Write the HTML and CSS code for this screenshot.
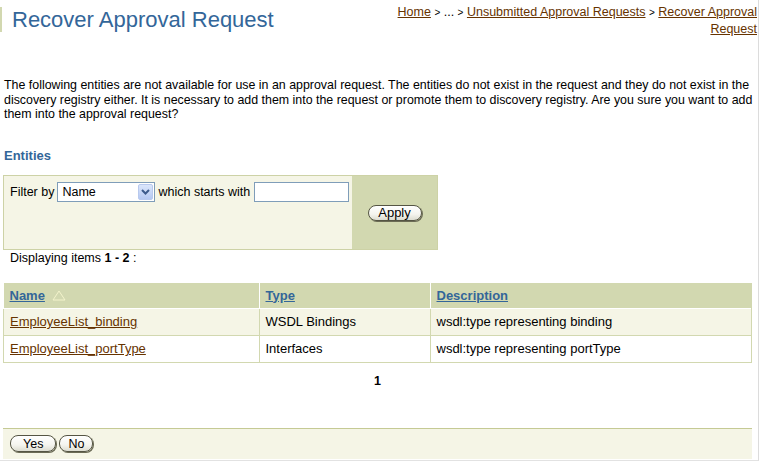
FILE: index.html
```html
<!DOCTYPE html>
<html lang="en">
<head>
    <meta charset="UTF-8">
    <title>Recover Approval Request</title>
    <link rel="stylesheet" href="styles.css">
</head>
<body>
    <div class="page">
        <div class="header">
            <h1 class="title">Recover Approval Request</h1>
            <div class="breadcrumb">
                <a href="#">Home</a> <span class="sep">&gt;</span> ... <span class="sep">&gt;</span>
                <a href="#">Unsubmitted Approval Requests</a> <span class="sep">&gt;</span>
                <a href="#">Recover Approval Request</a>
            </div>
        </div>

        <div class="content">
            <p class="intro">The following entities are not available for use in an approval request. The entities do not exist in the request and they do not exist in the discovery registry either. It is necessary to add them into the request or promote them to discovery registry. Are you sure you want to add them into the approval request?</p>

            <h2 class="section-title">Entities</h2>

            <div class="filter-box">
                <div class="filter-main">
                    <span>Filter by</span>
                    <div class="select">
                        <span>Name</span>
                        <span class="select-arrow">
                            <svg width="9" height="6" viewBox="0 0 9 6"><path d="M1 1 L4.5 4.5 L8 1" fill="none" stroke="#3c5a8c" stroke-width="2"/></svg>
                        </span>
                    </div>
                    <span>which starts with</span>
                    <div class="text-input"></div>
                </div>
                <div class="filter-side">
                    <button class="btn btn-apply">Apply</button>
                </div>
            </div>

            <div class="count">Displaying items <b>1 - 2</b> :</div>

            <table class="results">
                <tr>
                    <th class="col-name"><a href="#">Name</a>
                        <svg class="sort" width="14" height="11" viewBox="0 0 14 11"><polygon points="7,1 13,10 1,10" fill="none" stroke="#f4f4cc" stroke-width="1"/></svg>
                    </th>
                    <th class="col-type"><a href="#">Type</a></th>
                    <th><a href="#">Description</a></th>
                </tr>
                <tr class="odd">
                    <td><a href="#">EmployeeList_binding</a></td>
                    <td>WSDL Bindings</td>
                    <td>wsdl:type representing binding</td>
                </tr>
                <tr>
                    <td><a href="#">EmployeeList_portType</a></td>
                    <td>Interfaces</td>
                    <td>wsdl:type representing portType</td>
                </tr>
            </table>

            <div class="pager">1</div>

            <div class="footer-bar">
                <button class="btn">Yes</button>
                <button class="btn btn-no">No</button>
            </div>
        </div>
    </div>
</body>
</html>
```

FILE: styles.css
```css
body {
    margin: 0;
    padding: 0;
    background-color: #ffffff;
    color: #000000;
    font-family: 'Liberation Sans', Arial, sans-serif;
    font-size: 12.5px;
}

a {
    color: #663300;
}

.page {
    width: 758px;
    height: 460px;
    border-right: 1px solid #dcdcdc;
    border-bottom: 1px solid #e2e2e2;
    overflow: hidden;
}

.header {
    display: flex;
    justify-content: space-between;
    align-items: flex-start;
}

.title {
    margin: 7px 0 0 0;
    padding-left: 10px;
    border-left: 2px solid #d2d8b0;
    font-size: 22px;
    font-weight: normal;
    line-height: 25px;
    color: #336699;
}

.breadcrumb {
    width: 366px;
    margin-top: 4px;
    margin-right: 1px;
    text-align: right;
    line-height: 16px;
    font-size: 12.5px;
}

.breadcrumb .sep {
    font-size: 10px;
}

.content {
    padding: 0 6px 0 3px;
}

.intro {
    margin: 41px -5px 0 1px;
    font-size: 12.4px;
    line-height: 14.5px;
}

.section-title {
    margin: 26px 0 0 1px;
    font-size: 13px;
    line-height: 16px;
    color: #336699;
}

.filter-box {
    display: flex;
    width: 433px;
    height: 73px;
    margin-top: 11px;
    border: 1px solid #cdd2a6;
    background-color: #f5f5e6;
}

.filter-main {
    flex-grow: 1;
    display: flex;
    align-items: flex-start;
    gap: 3px;
    padding: 6px 0 0 6px;
}

.filter-main > span {
    line-height: 20px;
}

.select {
    width: 92px;
    height: 18px;
    border: 1px solid #7f9db9;
    background-color: #ffffff;
    display: flex;
    justify-content: space-between;
    align-items: center;
    padding-left: 4px;
    box-sizing: content-box;
}

.select-arrow {
    width: 15px;
    height: 16px;
    margin-right: 1px;
    background: linear-gradient(#dbe6fb, #b5c8f2);
    border: 1px solid #b8c9ee;
    border-radius: 2px;
    box-sizing: border-box;
    display: flex;
    justify-content: center;
    align-items: center;
}

.text-input {
    width: 93px;
    height: 18px;
    border: 1px solid #7f9db9;
    background-color: #ffffff;
    margin-left: 1px;
}

.filter-side {
    width: 85px;
    background-color: #d2d8b0;
    display: flex;
    justify-content: center;
    align-items: center;
    padding-top: 2px;
}

.btn {
    font-family: 'Liberation Sans', Arial, sans-serif;
    font-size: 12.5px;
    color: #000000;
    height: 17px;
    padding: 0 12px;
    border: 1px solid #555544;
    border-radius: 8px;
    background: linear-gradient(#ffffff, #f4f4ee 60%, #dcdcd0);
    box-shadow: 1px 1px 0 #6b6b55;
    line-height: 14px;
}

.btn-no {
    padding: 0 8px;
}

.btn-apply {
    font-size: 13px;
    width: 54px;
    height: 16px;
    padding: 0;
}

.count {
    margin: 1px 0 0 7px;
    line-height: 14px;
}

.results {
    width: 749px;
    margin-top: 18px;
    border-collapse: collapse;
}

.results th {
    height: 25px;
    padding: 0 6px;
    text-align: left;
    font-size: 13px;
    background-color: #d2d8b0;
    border-right: 1px solid #ffffff;
}

.results th:last-child {
    border-right: 1px solid #d2d8b0;
}

.results th a {
    color: #336699;
}

.results .col-name {
    width: 243px;
}

.results .col-type {
    width: 158px;
}

.sort {
    vertical-align: -1px;
    margin-left: 3px;
}

.results td {
    height: 26px;
    padding: 0 6px;
    font-size: 13px;
    border: 1px solid #d2d8b0;
}

.results tr.odd td {
    background-color: #f5f5e6;
    border-top: 1px solid #ffffff;
}

.pager {
    margin-top: 11px;
    text-align: center;
    font-weight: bold;
    line-height: 14px;
}

.footer-bar {
    margin-top: 40px;
    height: 30px;
    border-top: 1px solid #c5ca94;
    background-color: #f5f5e6;
    display: flex;
    align-items: center;
    gap: 3px;
    padding-left: 7px;
}
```
